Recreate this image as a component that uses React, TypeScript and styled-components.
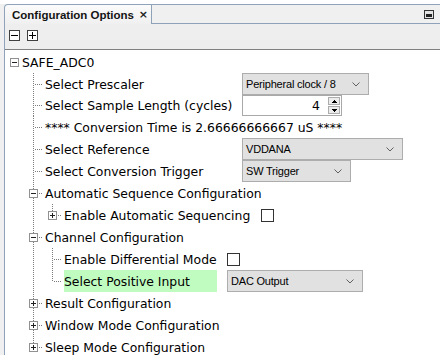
import React from "react";
import styled, { createGlobalStyle } from "styled-components";

const GlobalStyle = createGlobalStyle`
  html, body { margin: 0; padding: 0; background: #ffffff; }
  * { box-sizing: border-box; }
`;

type Control =
  | { kind: "combo"; value: string; width: number }
  | { kind: "spin"; value: string }
  | { kind: "check" };

interface TreeNode {
  label: string;
  handle?: "open" | "closed";
  control?: Control;
  labelWidth?: number;
  highlight?: boolean;
  rowHeight?: number;
  children?: TreeNode[];
}

const tree: TreeNode = {
  label: "SAFE_ADC0",
  handle: "open",
  children: [
    { label: "Select Prescaler", labelWidth: 187, control: { kind: "combo", value: "Peripheral clock / 8", width: 127 } },
    { label: "Select Sample Length (cycles)", labelWidth: 187, rowHeight: 21, control: { kind: "spin", value: "4" } },
    { label: "**** Conversion Time is 2.66666666667 uS ****" },
    { label: "Select Reference", labelWidth: 187, control: { kind: "combo", value: "VDDANA", width: 161 } },
    { label: "Select Conversion Trigger", labelWidth: 187, control: { kind: "combo", value: "SW Trigger", width: 109 } },
    {
      label: "Automatic Sequence Configuration",
      handle: "open",
      children: [
        { label: "Enable Automatic Sequencing", handle: "closed", labelWidth: 187, control: { kind: "check" } },
      ],
    },
    {
      label: "Channel Configuration",
      handle: "open",
      children: [
        { label: "Enable Differential Mode", labelWidth: 153, control: { kind: "check" } },
        { label: "Select Positive Input", labelWidth: 153, highlight: true, control: { kind: "combo", value: "DAC Output", width: 136 } },
      ],
    },
    { label: "Result Configuration", handle: "closed" },
    { label: "Window Mode Configuration", handle: "closed" },
    { label: "Sleep Mode Configuration", handle: "closed" },
  ],
};

const DOT = "#7c7c7c";

const Page = styled.div`
  width: 440px;
  height: 355px;
  overflow: hidden;
  display: flex;
  flex-direction: column;
  background: #f0f0f0;
`;

const TabBar = styled.div`
  height: 24px;
  flex: none;
  display: flex;
  align-items: flex-end;
  padding-left: 4px;
  background: linear-gradient(#ffffff 0 4px, #f0f0f0 4px);
`;

const Tab = styled.div`
  width: 148px;
  height: 20px;
  display: flex;
  align-items: center;
  justify-content: space-between;
  padding: 0 3px 0 7px;
  border: 1px solid #8ea3b9;
  border-bottom: none;
  border-top-left-radius: 4px;
  background: linear-gradient(#fbfbfb, #f0f0f0);
  font: bold 11.5px "Liberation Sans", Arial, sans-serif;
  color: #141414;
`;

const Close = styled.span`
  font: bold 11px "DejaVu Sans", sans-serif;
  color: #222;
`;

const TabFiller = styled.div`
  flex: 1;
  height: 20px;
  display: flex;
  align-items: center;
  justify-content: flex-end;
  padding-right: 6px;
  border-top: 1px solid #8ea3b9;
  border-bottom: 1px solid #8ea3b9;
`;

const Body = styled.div`
  flex: 1;
  margin-left: 4px;
  border-left: 1px solid #8ea3b9;
  display: flex;
  flex-direction: column;
  min-height: 0;
`;

const Toolbar = styled.div`
  height: 26px;
  flex: none;
  display: flex;
  align-items: flex-start;
  gap: 7px;
  padding: 6px 0 0 4px;
  background: #eeeeee;
  border-bottom: 1px solid #808080;
`;

const ToolButton = styled.div`
  width: 11px;
  height: 11px;
  border: 1px solid #404040;
  background: #ffffff;
  display: flex;
  align-items: center;
  justify-content: center;
`;

const TreeArea = styled.div`
  flex: 1;
  background: #ffffff;
  padding-top: 1px;
  font: 12.4px "DejaVu Sans", Verdana, sans-serif;
  color: #000000;
`;

const Row = styled.div<{ $h: number }>`
  height: ${(p) => p.$h}px;
  display: flex;
  align-items: stretch;
  white-space: nowrap;
`;

const Lines = styled.svg`
  flex: none;
  display: block;
`;

const Label = styled.span<{ $w?: number; $hl?: boolean }>`
  display: flex;
  align-items: center;
  margin-left: 2px;
  width: ${(p) => (p.$w ? `${p.$w}px` : "auto")};
  flex: none;
  background: ${(p) => (p.$hl ? "#c0fcc0" : "transparent")};
`;

const Field = styled.div`
  margin-left: 10px;
  display: flex;
  align-items: center;
`;

const Combo = styled.div<{ $w: number }>`
  width: ${(p) => p.$w}px;
  height: 22px;
  display: flex;
  align-items: center;
  justify-content: space-between;
  padding: 0 8px 0 3px;
  border: 1px solid #adadad;
  background: #e1e1e1;
  font: 11px "Liberation Sans", Arial, sans-serif;
  letter-spacing: -0.2px;
  color: #000;
`;

const Spinner = styled.div`
  width: 100px;
  height: 21px;
  display: flex;
  border: 1px solid #a9a9a9;
  background: #ffffff;
`;

const SpinText = styled.div`
  flex: 1;
  display: flex;
  align-items: center;
  justify-content: flex-end;
  padding-right: 8px;
  font: 12.4px "DejaVu Sans", sans-serif;
`;

const SpinButtons = styled.div`
  width: 13px;
  display: flex;
  flex-direction: column;
  gap: 1px;
  padding: 1px 1px 1px 0;
`;

const SpinButton = styled.div`
  flex: 1;
  display: flex;
  align-items: center;
  justify-content: center;
  border: 1px solid #acacac;
  background: #ececec;
`;

const Check = styled.div`
  width: 13px;
  height: 13px;
  border: 1px solid #333333;
  background: #ffffff;
`;

const Chevron = () => (
  <svg width="8" height="5" viewBox="0 0 8 5">
    <polyline points="0.5,0.5 4,4 7.5,0.5" fill="none" stroke="#606060" strokeWidth="1" />
  </svg>
);

const Triangle = ({ up }: { up?: boolean }) => (
  <svg width="5" height="3" viewBox="0 0 5 3" shapeRendering="crispEdges">
    <polygon points={up ? "2.5,0 5,3 0,3" : "0,0 5,0 2.5,3"} fill="#000" />
  </svg>
);

const MinimizeIcon = () => (
  <svg width="10" height="9" viewBox="0 0 10 9" shapeRendering="crispEdges">
    <rect x="0.5" y="0.5" width="9" height="8" fill="#e4e4e4" stroke="#333" />
    <rect x="2" y="4" width="6" height="3" fill="#222" />
  </svg>
);

const Sign = ({ plus, size, color }: { plus?: boolean; size: number; color: string }) => {
  const m = Math.floor(size / 2);
  return (
    <svg width={size} height={size} viewBox={`0 0 ${size} ${size}`} shapeRendering="crispEdges">
      <rect x="0" y={m} width={size} height="1" fill={color} />
      {plus && <rect x={m} y="0" width="1" height={size} fill={color} />}
    </svg>
  );
};

function dotRects(x0: number, y0: number, dx: number, dy: number, n: number) {
  const out: React.ReactNode[] = [];
  for (let i = 0; i < n; i++)
    out.push(<rect key={`${x0}-${y0}-${i}`} x={x0 + dx * i} y={y0 + dy * i} width="1" height="1" fill={DOT} />);
  return out;
}

// elbow of a tree row: vertical and horizontal dotted legs, optional +/- handle
function Elbow({ h, last, root, handle }: { h: number; last: boolean; root: boolean; handle?: "open" | "closed" }) {
  const c = Math.floor(h / 2);
  const w = root ? 15 : 19;
  return (
    <Lines width={w} height={h} viewBox={`0 0 ${w} ${h}`} shapeRendering="crispEdges">
      {!root && dotRects(9, 0, 0, 2, Math.ceil((last ? c + 1 : h) / 2))}
      {dotRects(11, c, 2, 0, Math.ceil((w - 11) / 2))}
      {handle && (
        <>
          <rect x="5" y={c - 4} width="9" height="9" fill="#919191" />
          <rect x="6" y={c - 3} width="7" height="7" fill="#ffffff" />
          <rect x="7" y={c} width="5" height="1" fill="#222" />
          {handle === "closed" && <rect x="9" y={c - 2} width="1" height="5" fill="#222" />}
        </>
      )}
    </Lines>
  );
}

// vertical guide for an ancestor that still has siblings below
function Guide({ h, on }: { h: number; on: boolean }) {
  return (
    <Lines width={19} height={h} viewBox={`0 0 19 ${h}`} shapeRendering="crispEdges">
      {on && dotRects(9, 0, 0, 2, Math.ceil(h / 2))}
    </Lines>
  );
}

function renderControl(c: Control) {
  if (c.kind === "combo")
    return (
      <Combo $w={c.width}>
        <span>{c.value}</span>
        <Chevron />
      </Combo>
    );
  if (c.kind === "spin")
    return (
      <Spinner>
        <SpinText>{c.value}</SpinText>
        <SpinButtons>
          <SpinButton><Triangle up /></SpinButton>
          <SpinButton><Triangle /></SpinButton>
        </SpinButtons>
      </Spinner>
    );
  return <Check />;
}

function renderNodes(nodes: TreeNode[], guides: boolean[], root = false): React.ReactNode[] {
  const out: React.ReactNode[] = [];
  nodes.forEach((node, i) => {
    const last = i === nodes.length - 1;
    const h = node.rowHeight ?? 22;
    out.push(
      <Row key={`${guides.length}-${node.label}`} $h={h}>
        {guides.map((g, k) => (
          <Guide key={k} h={h} on={g} />
        ))}
        <Elbow h={h} last={last} root={root} handle={node.handle} />
        <Label $w={node.control ? node.labelWidth : undefined} $hl={node.highlight}>
          {node.label}
        </Label>
        {node.control && <Field>{renderControl(node.control)}</Field>}
      </Row>
    );
    if (node.handle === "open" && node.children) {
      out.push(...renderNodes(node.children, [...guides, !last && !root]));
    }
  });
  return out;
}

export default function App() {
  return (
    <Page>
      <GlobalStyle />
      <TabBar>
        <Tab>
          <span>Configuration Options</span>
          <Close>×</Close>
        </Tab>
        <TabFiller>
          <MinimizeIcon />
        </TabFiller>
      </TabBar>
      <Body>
        <Toolbar>
          <ToolButton><Sign size={7} color="#000" /></ToolButton>
          <ToolButton><Sign plus size={7} color="#000" /></ToolButton>
        </Toolbar>
        <TreeArea>{renderNodes([tree], [], true)}</TreeArea>
      </Body>
    </Page>
  );
}
